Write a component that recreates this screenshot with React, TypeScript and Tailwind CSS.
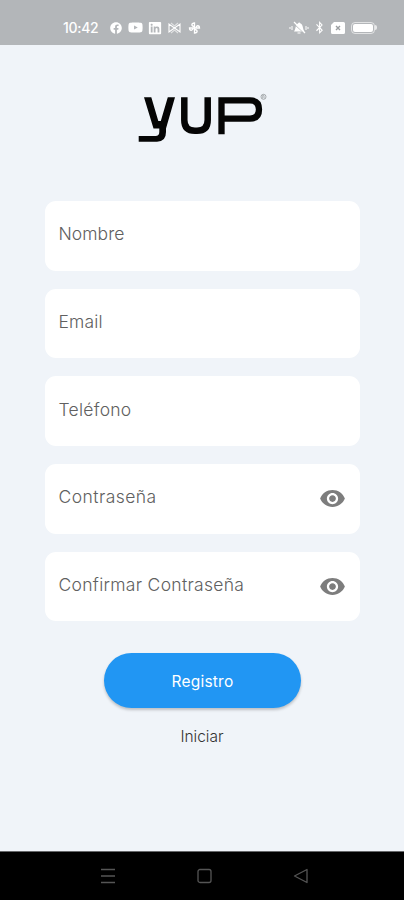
import { FaFacebook, FaYoutube, FaLinkedin, FaBluetoothB } from "react-icons/fa"
import { MdVisibility } from "react-icons/md"

const fields = [
  { label: "Nombre", tracking: "tracking-[0.05px]", secret: false },
  { label: "Email", tracking: "tracking-[0.15px]", secret: false },
  { label: "Teléfono", tracking: "tracking-[0.28px]", secret: false },
  { label: "Contraseña", tracking: "tracking-[0.45px]", secret: true },
  { label: "Confirmar Contraseña", tracking: "tracking-[0.3px]", secret: true },
]

function StatusBar() {
  return (
    <div className="h-[44.500px] shrink-0 bg-[#b3b6b9] pt-[11px] pl-[63px] pr-[27px] flex items-center justify-between text-white">
      <div className="flex items-center">
        <span className="w-[47px] text-[14px] leading-none font-medium tracking-[-0.3px]">10:42</span>
        <FaFacebook className="size-[12px]" />
        <FaYoutube className="ml-[6px] size-[15px]" />
        <FaLinkedin className="ml-[5px] size-[14px]" />
        <svg className="ml-[6px]" width="13" height="12" viewBox="0 0 13 12" fill="none" stroke="currentColor" strokeWidth="1.100">
          <path d="M1 2v8l5.500-4L12 10V2L6.500 6Z" />
          <path d="M3 1l3.500 3L10 1M3 11l3.500-3L10 11" opacity="0.600" />
        </svg>
        {/* Pinwheel */}
        <svg className="ml-[7px]" width="13" height="12" viewBox="0 0 13 12" fill="none" stroke="currentColor" strokeWidth="1.300">
          <path d="M6.500 6V1C3 1 3 4.500 6.500 4.500M6.500 6h5c0-3-3.500-3-3.500 0M6.500 6v5C10 11 10 7.500 6.500 7.500M6.500 6h-5c0 3 3.500 3 3.500 0" />
        </svg>
      </div>

      <div className="flex items-center">
        <svg width="20" height="14" viewBox="0 0 20 14" fill="none" stroke="currentColor">
          <path d="M5 10.500c2-2 1-7 4-8 .5-1.500 2-1.500 2.500 0 3 1 2 6 4 8Z" fill="currentColor" stroke="none" />
          <path d="M8.500 12h3M3 5v4M1 6v2M17 5v4M19 6v2" />
          <path d="M4 2l12 11" stroke="#b3b6b9" />
          <path d="M5 1l11 11" strokeWidth="1.200" />
        </svg>
        <FaBluetoothB className="ml-[4px] size-[13px]" />
        <svg className="ml-[5px]" width="14" height="12" viewBox="0 0 14 12">
          <path d="M3 0h9.500A1.500 1.500 0 0 1 14 1.500v9a1.500 1.500 0 0 1-1.500 1.500h-11A1.500 1.500 0 0 1 0 10.500V3Z" fill="currentColor" />
          <path d="M5 4l4 4M9 4L5 8" stroke="#9a9da0" strokeWidth="1.400" />
        </svg>
        <div className="ml-[6px] w-[24px] h-[12px] rounded-[4px] border border-white/60 p-[1px]">
          <div className="h-full rounded-[2px] bg-white" />
        </div>
        <div className="w-[2px] h-[5px] rounded-r-sm bg-white/70" />
      </div>
    </div>
  )
}

function Logo() {
  return (
    <svg className="mt-[47.500px] ml-[138px] shrink-0" width="132" height="52" viewBox="0 0 132 52" fill="none" stroke="#050505">
      <path
        d="M6 5.300H13.300L20.300 29H22.800L29.800 5.300H37L28 36.500V40Q28 49.700 19 49.700H0.700V44H17.500Q21.300 44 21.300 40V36.500H15.500Z"
        fill="#050505"
        stroke="none"
      />
      <path d="M46.300 5.300V28Q46.300 38.800 57 38.800H59Q69.700 38.800 69.700 28V5.300" strokeWidth="6.500" />
      <path d="M83.500 42.300V8.400H112Q121 8.400 121 17.500Q121 26.600 112 26.600H83.500" strokeWidth="6.300" />
      <circle cx="125.500" cy="4.800" r="2.500" stroke="#85898c" strokeWidth="0.700" />
      <path d="M124.700 6.400V3.400h1q1 .8 0 1.600l1 1.400" stroke="#85898c" strokeWidth="0.600" />
    </svg>
  )
}

function Field({ label, tracking, secret }: { label: string; tracking: string; secret: boolean }) {
  return (
    <div className="h-[69.500px] rounded-[11px] bg-white pl-[13.500px] pr-[14px] flex items-center justify-between">
      <span className={`${tracking} -mt-[3px] whitespace-nowrap text-[17.500px] font-light text-[#606060]`}>{label}</span>
      {secret && <MdVisibility className="size-[27px] text-[#7d7d7d]" />}
    </div>
  )
}

function NavBar() {
  return (
    <div className="mt-auto h-[49px] shrink-0 bg-black border-t border-[#66686a] flex items-center justify-between pl-[100px] pr-[95px] text-[#555]">
      <svg width="16" height="16" viewBox="0 0 16 16" fill="none" stroke="currentColor" strokeWidth="1.500">
        <path d="M1 1.500h14M1 8h14M1 14.500h14" />
      </svg>
      <svg width="16" height="16" viewBox="0 0 16 16" fill="none" stroke="currentColor" strokeWidth="1.300">
        <rect x="1" y="1.500" width="13" height="13" rx="2" />
      </svg>
      <svg width="16" height="16" viewBox="0 0 16 16" fill="none" stroke="currentColor" strokeWidth="1.300" strokeLinejoin="round">
        <path d="M14 1.500v13L1.500 8Z" />
      </svg>
    </div>
  )
}

export default function App() {
  return (
    <div className="w-[404px] h-[900px] overflow-hidden bg-[#f0f4f9] flex flex-col font-['Inter',sans-serif]">
      <StatusBar />
      <Logo />
      <div className="mt-[57px] ml-[45px] mr-[44px] flex flex-col gap-[18.200px]">
        {fields.map((field) => (
          <Field key={field.label} {...field} />
        ))}
      </div>
      <button className="mt-[32px] ml-[104px] w-[197px] h-[55px] shrink-0 rounded-full bg-[#2196f3] pt-[2px] text-[15.500px] tracking-[0.200px] text-white shadow-[0_2px_3px_rgba(0,0,0,0.22)]">
        Registro
      </button>
      <a className="mt-[18px] self-center text-[15.500px] leading-[22px] font-light text-[#333]">Iniciar</a>
      <NavBar />
    </div>
  )
}
